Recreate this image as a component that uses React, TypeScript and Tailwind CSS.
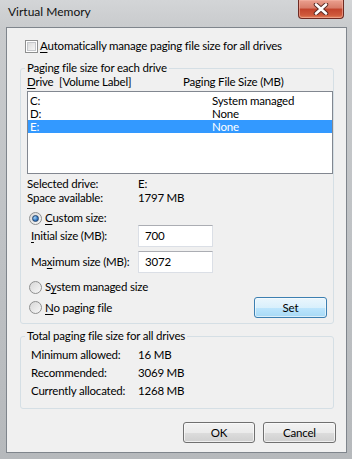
import type { FC, ReactNode } from "react";

const Accel: FC<{ children: ReactNode }> = ({ children }) => (
	<span className="underline decoration-1 underline-offset-[2px]">{children}</span>
);

const Checkbox: FC = () => (
	<span className="flex h-[13px] w-[13px] items-center justify-center border border-[#8e8f8f] bg-white">
		<span className="h-[9px] w-[9px] border border-[#c5c7cb] bg-[linear-gradient(135deg,#dcdcdc,#f6f6f6)]" />
	</span>
);

const Radio: FC<{ checked?: boolean }> = ({ checked }) => (
	<span className="flex h-[13px] w-[13px] shrink-0 items-center justify-center rounded-full border border-[#8e8f8f] bg-[linear-gradient(135deg,#d7d7d7,#f8f8f8)]">
		{checked ? (
			<span className="h-[7px] w-[7px] rounded-full border border-[#26456b] bg-[radial-gradient(circle_at_35%_35%,#a8d5f5,#2f74c2_60%,#1b4f92)]" />
		) : null}
	</span>
);

const WinButton: FC<{ children: ReactNode; active?: boolean; width: string }> = ({
	children,
	active,
	width,
}) => (
	<button
		type="button"
		className={
			active
				? `${width} h-[21px] rounded-[3px] border border-[#3c7fb1] bg-[linear-gradient(#eaf6fd_0%,#d9f0fc_50%,#bee6fd_50%,#a7d9f5_100%)] leading-[19px] text-black shadow-[inset_0_0_0_1px_#fcfcfc99]`
				: `${width} h-[21px] rounded-[3px] border border-[#707070] bg-[linear-gradient(#f2f2f2_0%,#ebebeb_50%,#dddddd_50%,#cfcfcf_100%)] leading-[19px] text-black shadow-[inset_0_0_0_1px_#fcfcfcb0]`
		}
	>
		{children}
	</button>
);

const TextBox: FC<{ value: string; height: string }> = ({ value, height }) => (
	<div
		className={`${height} w-[75px] border border-[#dbdfe6] border-t-[#abadb3] bg-white pl-[6px] leading-[19px]`}
	>
		{value}
	</div>
);

const drives = [
	{ drive: "C:", size: "System managed" },
	{ drive: "D:", size: "None" },
	{ drive: "E:", size: "None", selected: true },
];

const totals = [
	["Minimum allowed:", "16 MB"],
	["Recommended:", "3069 MB"],
	["Currently allocated:", "1268 MB"],
];

export default function App() {
	return (
		<div className="relative h-[459px] w-[352px] overflow-hidden whitespace-nowrap bg-[linear-gradient(180deg,#d3d5d7_0%,#c9cbcd_6%,#bfc2c5_50%,#b6b9bc_100%)] font-['Lato',sans-serif] text-[11.5px] tracking-[-0.2px] text-black">
			<div className="flex h-[27px] items-start justify-between">
				<span className="pl-[8px] pt-[4px] text-[12px] leading-[16px] tracking-normal text-[#111]">
					Virtual Memory
				</span>
				<div className="mr-[8px] flex h-[19px] w-[46px] items-center justify-center rounded-b-[4px] border border-t-0 border-[#6e2a22] bg-[linear-gradient(#eba08f_0%,#d77b68_45%,#c2432c_50%,#cf5a3c_85%,#e5885f_100%)] shadow-[inset_0_0_0_1px_#f3b3a399]">
					<svg width="16" height="12" viewBox="0 0 16 12">
						<path
							d="M3 1.5 L13 10.5 M13 1.5 L3 10.5"
							stroke="#5a2a24"
							strokeWidth="4.5"
							strokeLinecap="round"
						/>
						<path
							d="M3 1.5 L13 10.5 M13 1.5 L3 10.5"
							stroke="#ffffff"
							strokeWidth="2.6"
							strokeLinecap="round"
						/>
					</svg>
				</div>
			</div>

			<div className="ml-[6px] h-[426px] w-[341px] border border-[#7f858c] bg-[#f0f0f0]">
				<div className="mt-[11px] flex h-[14px] items-center pl-[18px]">
					<Checkbox />
					<span className="ml-[2px] leading-[14px]">
						<Accel>A</Accel>utomatically manage paging file size for all drives
					</span>
				</div>

				<fieldset className="ml-[13px] mt-[8px] w-[314px] rounded-[3px] border border-[#d5dfe5]">
					<legend className="ml-[4px] px-[2px] leading-[14px]">Paging file size for each drive</legend>
					<div className="pb-[5px] pl-[6px]">
						<div className="flex h-[14px] items-center leading-[14px]">
							<span className="w-[32px]">
								<Accel>D</Accel>rive
							</span>
							<span className="w-[124px]">[Volume Label]</span>
							<span>Paging File Size (MB)</span>
						</div>
						<div className="mt-[2px] h-[83px] w-[306px] border border-[#828790] bg-white pt-[2px]">
							{drives.map((d) => (
								<div
									key={d.drive}
									className={`flex h-[13px] items-center leading-[13px] ${d.selected ? "bg-[#3399ff] text-white" : ""}`}
								>
									<span className="w-[184px] pl-[2px]">{d.drive}</span>
									<span>{d.size}</span>
								</div>
							))}
						</div>

						<div className="mt-[3px] flex h-[14px] items-center leading-[14px]">
							<span className="w-[111px]">Selected drive:</span>
							<span>E:</span>
						</div>
						<div className="flex h-[14px] items-center leading-[14px]">
							<span className="w-[111px]">Space available:</span>
							<span>1797 MB</span>
						</div>

						<div className="mt-[6px] flex h-[14px] items-center pl-[2px] leading-[14px]">
							<Radio checked />
							<span className="ml-[3px]">
								<Accel>C</Accel>ustom size:
							</span>
						</div>
						<div className="flex h-[22px] items-center">
							<span className="w-[111px] pl-[4px]">
								<Accel>I</Accel>nitial size (MB):
							</span>
							<TextBox value="700" height="h-[22px]" />
						</div>
						<div className="mt-[4px] flex h-[22px] items-center">
							<span className="w-[111px] pl-[4px]">
								Ma<Accel>x</Accel>imum size (MB):
							</span>
							<TextBox value="3072" height="h-[22px]" />
						</div>

						<div className="mt-[7px] flex h-[14px] items-center pl-[2px] leading-[14px]">
							<Radio />
							<span className="ml-[3px]">
								S<Accel>y</Accel>stem managed size
							</span>
						</div>
						<div className="mt-[3px] flex h-[21px] items-center pl-[2px] pr-[6px] leading-[14px]">
							<Radio />
							<span className="ml-[3px]">
								<Accel>N</Accel>o paging file
							</span>
							<div className="ml-auto">
								<WinButton active width="w-[73px]">
									Set
								</WinButton>
							</div>
						</div>
					</div>
				</fieldset>

				<fieldset className="ml-[13px] mt-[5px] w-[314px] rounded-[3px] border border-[#d5dfe5]">
					<legend className="ml-[4px] px-[2px] leading-[14px]">Total paging file size for all drives</legend>
					<div className="pb-[8px] pl-[10px] pt-[3px]">
						{totals.map(([label, value]) => (
							<div key={label} className="flex h-[18px] items-center leading-[14px]">
								<span className="w-[107px]">{label}</span>
								<span>{value}</span>
							</div>
						))}
					</div>
				</fieldset>

				<div className="mt-[13px] flex justify-end gap-[8px] pr-[10px]">
					<WinButton width="w-[72px]">OK</WinButton>
					<WinButton width="w-[73px]">Cancel</WinButton>
				</div>
			</div>
		</div>
	);
}
